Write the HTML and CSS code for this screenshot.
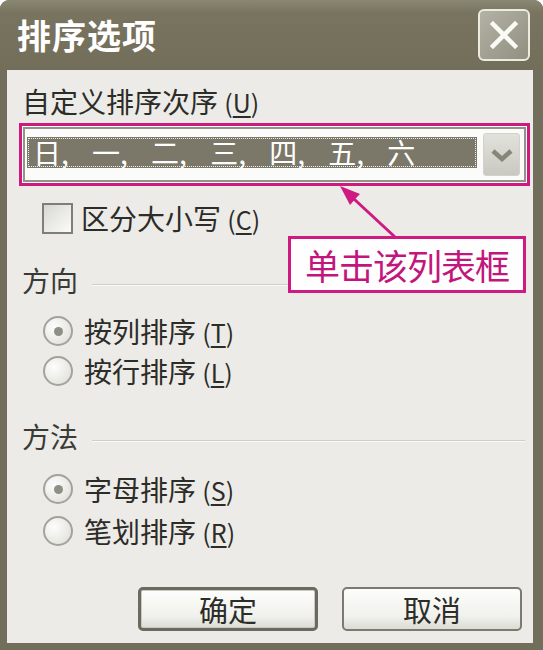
FILE: index.html
```html
<!DOCTYPE html>
<html lang="zh">
<head>
<meta charset="utf-8">
<title>排序选项</title>
<link rel="stylesheet" href="styles.css">
</head>
<body>
<div class="window">
  <div class="titlebar">
    <span class="title">排序选项</span>
    <button class="close" aria-label="关闭">
      <svg width="28" height="28" viewBox="0 0 28 28"><path d="M3 3 L25 25 M25 3 L3 25" stroke="#fbfbf6" stroke-width="4.5" stroke-linecap="square" fill="none"/></svg>
    </button>
  </div>
  <div class="content">
    <div class="label">自定义排序次序 <span class="key">(<u>U</u>)</span></div>
    <div class="highlight">
      <div class="combo">
        <div class="combo-value">日, 一, 二, 三, 四, 五, 六</div>
        <div class="combo-btn">
          <svg width="22" height="14" viewBox="0 0 22 14"><path d="M2 3 L11 11 L20 3" stroke="#86867b" stroke-width="4.5" fill="none"/></svg>
        </div>
      </div>
    </div>
    <div class="check-row"><span class="checkbox"></span><span>区分大小写 <span class="key">(<u>C</u>)</span></span></div>

    <div class="group-head"><span>方向</span><span class="rule"></span></div>
    <div class="radios">
      <div class="radio-row"><span class="radio checked"></span><span>按列排序 <span class="key">(<u>T</u>)</span></span></div>
      <div class="radio-row"><span class="radio"></span><span>按行排序 <span class="key">(<u>L</u>)</span></span></div>
    </div>

    <div class="group-head second"><span>方法</span><span class="rule"></span></div>
    <div class="radios tall">
      <div class="radio-row"><span class="radio checked"></span><span>字母排序 <span class="key">(<u>S</u>)</span></span></div>
      <div class="radio-row"><span class="radio"></span><span>笔划排序 <span class="key">(<u>R</u>)</span></span></div>
    </div>

    <div class="buttons">
      <button class="btn default">确定</button>
      <button class="btn">取消</button>
    </div>

    <svg class="callout-arrow" width="70" height="60" viewBox="0 0 70 60">
      <line x1="65" y1="54" x2="24" y2="16" stroke="#cf1a82" stroke-width="3"/>
      <polygon points="10,3 30,11 27,14 20,22" fill="#cf1a82"/>
    </svg>
    <div class="callout">单击该列表框</div>
  </div>
</div>
</body>
</html>
```

FILE: styles.css
```css
* { box-sizing: border-box; }
html, body { margin: 0; padding: 0; background: #ffffff; }
body {
  font-family: "Noto Sans CJK SC", "Noto Sans", sans-serif;
  color: #2c2c28;
}
.window {
  width: 543px;
  height: 650px;
  background: #716e5b;
  border-radius: 9px 9px 0 0;
  display: flex;
  flex-direction: column;
  overflow: hidden;
}
.titlebar {
  flex: none;
  height: 70px;
  display: flex;
  align-items: center;
  justify-content: space-between;
  padding: 0 13px 0 17px;
  background: linear-gradient(#8a8773, #78745f 18%, #726e5a);
}
.title {
  color: #ffffff;
  font-size: 34px;
  font-weight: bold;
  line-height: 1;
  letter-spacing: 1px;
}
.close {
  width: 52px;
  height: 52px;
  padding: 0;
  border: 2px solid #ecebe0;
  border-radius: 6px;
  background: linear-gradient(135deg, #b4b2a6, #918f80);
  display: flex;
  align-items: center;
  justify-content: center;
}
.content {
  position: relative;
  flex: 1;
  margin: 0 10px 7px 7px;
  background: #ecebe7;
  display: flex;
  flex-direction: column;
  padding: 15px 3px 12px 0;
  font-size: 28px;
}
.label {
  height: 32px;
  line-height: 32px;
  margin-left: 15px;
}
.key { font-size: 25px; }
.key u { text-underline-offset: 3px; }
.highlight {
  margin: 6px 0 0 12px;
  width: 511px;
  height: 63px;
  border: 3px solid #d0197f;
  padding: 1px;
  background: #ffffff;
}
.combo {
  height: 100%;
  border: 2px solid #93938b;
  background: #fbfbf9;
  display: flex;
  align-items: center;
  padding: 0 4px 0 2px;
}
.combo-value {
  flex: 1;
  height: 31px;
  margin: 0 6px 4px 0;
  background: #7b7869;
  color: #ffffff;
  line-height: 31px;
  padding-left: 6px;
  white-space: pre;
  word-spacing: 17px;
  outline: 1px dotted #f0f0e8;
  outline-offset: -2px;
}
.combo-btn {
  width: 37px;
  height: 43px;
  border: 1px solid #d2d2ca;
  border-radius: 3px;
  background: linear-gradient(#e2e2dc, #c9c9c1);
  display: flex;
  align-items: center;
  justify-content: center;
}
.check-row {
  margin-top: 16px;
  height: 32px;
  display: flex;
  align-items: center;
  gap: 8px;
  padding-left: 35px;
  line-height: 32px;
}
.checkbox {
  width: 31px;
  height: 31px;
  border: 2px solid #7f7f77;
  background: linear-gradient(135deg, #d8d8d2, #fbfbfa);
}
.group-head {
  margin-top: 30px;
  height: 32px;
  line-height: 32px;
  display: flex;
  align-items: center;
  padding: 0 5px 0 15px;
  color: #3a3a36;
}
.group-head.second { margin-top: 29px; }
.rule {
  flex: 1;
  height: 2px;
  margin: 10px 0 0 14px;
  border-top: 1px solid #cfcec8;
  border-bottom: 1px solid #fafaf8;
}
.radios {
  margin-top: 15px;
  padding-left: 36px;
}
.radios.tall { margin-top: 16px; }
.radio-row {
  height: 40px;
  display: flex;
  align-items: center;
  gap: 11px;
  line-height: 32px;
}
.radios.tall .radio-row { height: 42px; }
.radio {
  width: 30px;
  height: 30px;
  border-radius: 50%;
  border: 2px solid #a3a39b;
  background: radial-gradient(circle at 35% 35%, #fdfdfc, #dcdcd6);
  display: flex;
  align-items: center;
  justify-content: center;
}
.radio.checked::after {
  content: "";
  width: 9px;
  height: 9px;
  border-radius: 50%;
  background: #8f8f86;
}
.buttons {
  margin-top: auto;
  display: flex;
  justify-content: flex-end;
  gap: 24px;
  padding-right: 8px;
}
.btn {
  width: 180px;
  height: 44px;
  font-family: inherit;
  font-size: 29px;
  line-height: 1;
  color: #2c2c28;
  border: 2px solid #7a7a70;
  border-radius: 5px;
  background: linear-gradient(#fdfdfb, #f0f0ec 70%, #dcdcd4);
  padding: 0;
}
.btn.default {
  border: 3px solid #6a6a5f;
  box-shadow: inset 0 0 0 1px #c9c9c0;
}
.callout-arrow {
  position: absolute;
  left: 323px;
  top: 113px;
}
.callout {
  position: absolute;
  left: 281px;
  top: 166px;
  width: 238px;
  height: 57px;
  border: 3px solid #cf1a82;
  background: #fefefe;
  color: #c2167c;
  font-size: 35px;
  line-height: 51px;
  text-align: center;
  letter-spacing: -1px;
}
```
